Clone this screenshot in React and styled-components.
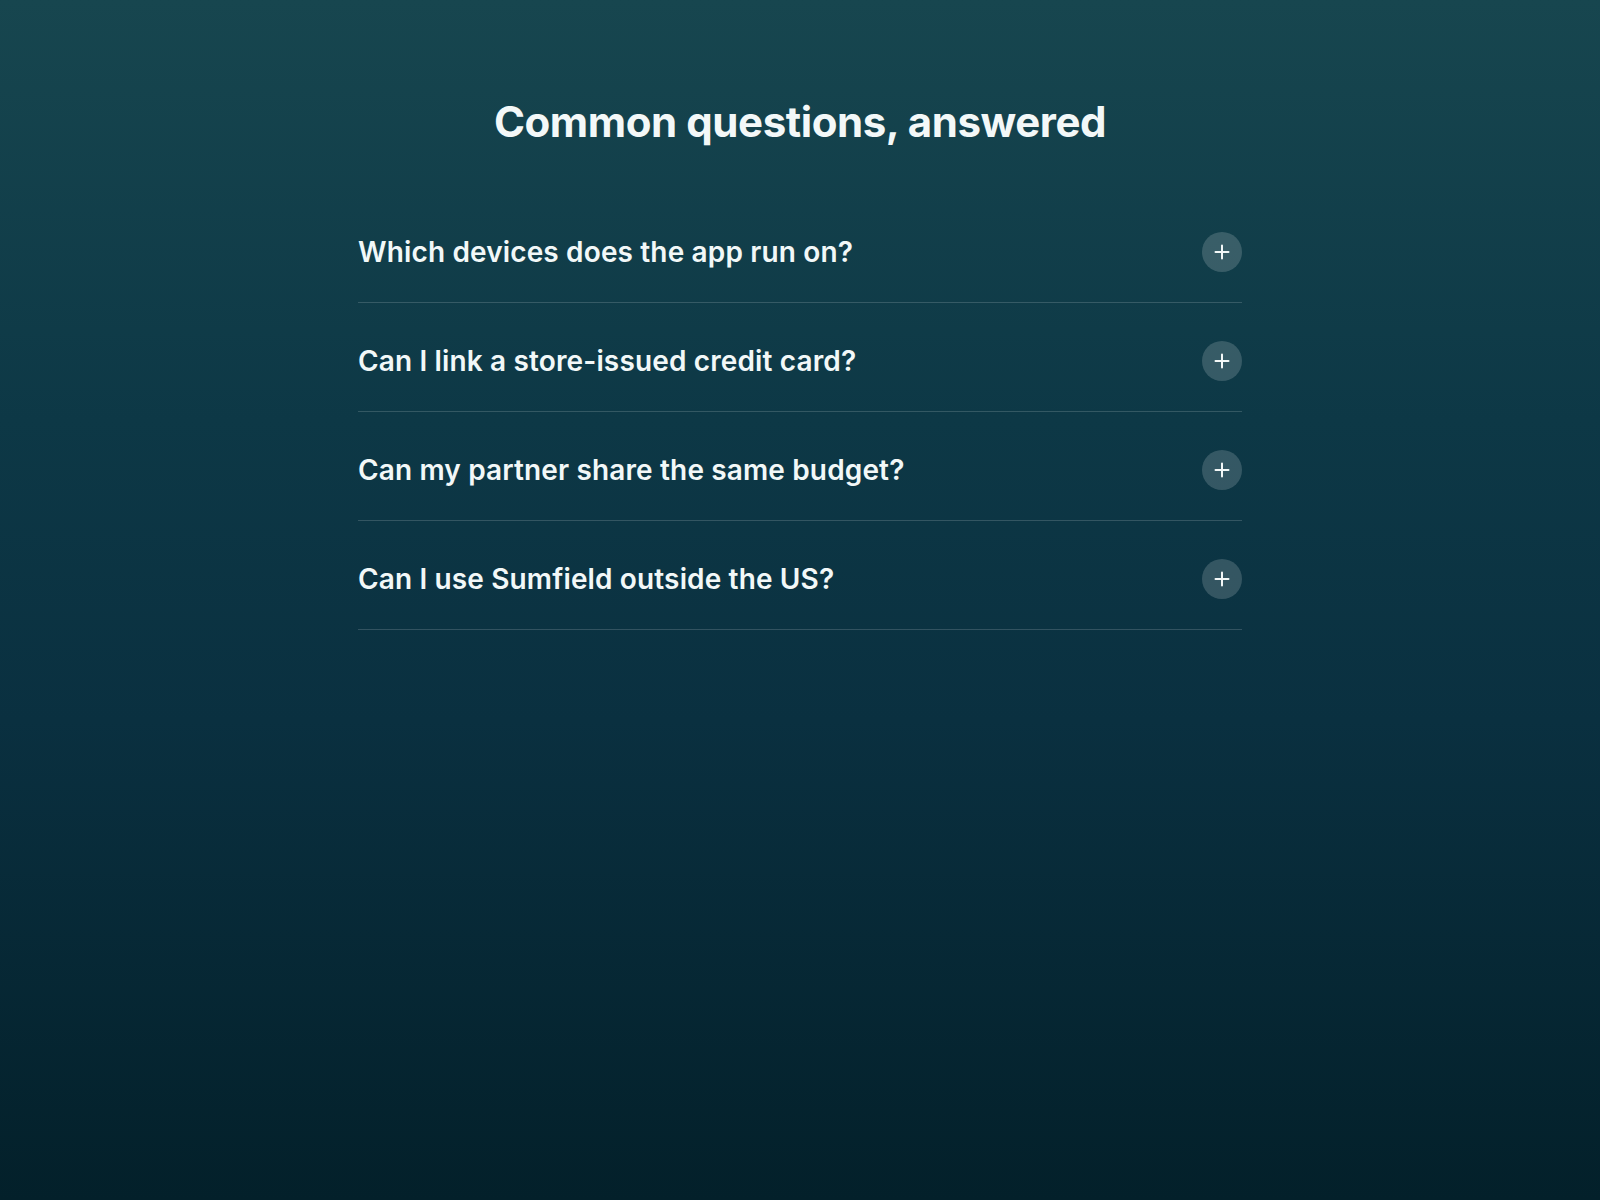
import React from "react";
import styled, { createGlobalStyle } from "styled-components";

const GlobalStyle = createGlobalStyle`
  html, body {
    margin: 0;
    padding: 0;
  }
  body {
    font-family: Inter, "Noto Sans", sans-serif;
    color: #eef6f6;
    background: #03202a;
  }
`;

const Page = styled.main`
  min-height: 1200px;
  box-sizing: border-box;
  padding-top: 98px;
  background: linear-gradient(180deg, #17464f 0%, #0d3846 35%, #0a3040 60%, #03202a 100%);
`;

const Section = styled.section`
  width: 884px;
  margin: 0 auto;
`;

const Title = styled.h2`
  margin: 0 0 48px;
  font-size: 42px;
  line-height: 48px;
  font-weight: 700;
  letter-spacing: -0.01em;
  text-align: center;
  color: #f3f8f8;
`;

const List = styled.div`
  display: flex;
  flex-direction: column;
`;

const Item = styled.div`
  border-bottom: 1px solid rgba(255, 255, 255, 0.16);
`;

const Question = styled.button`
  display: flex;
  align-items: center;
  justify-content: space-between;
  width: 100%;
  padding: 38px 0 30px;
  border: 0;
  background: none;
  cursor: pointer;
  font-family: inherit;
  text-align: left;
  color: #f2f8f8;
  font-size: 28px;
  line-height: 40px;
  font-weight: 600;
  letter-spacing: 0.005em;
`;

const Toggle = styled.span`
  display: flex;
  align-items: center;
  justify-content: center;
  width: 40px;
  height: 40px;
  flex: none;
  border-radius: 50%;
  background: rgba(255, 255, 255, 0.17);
`;

const PlusIcon = () => (
  <svg width="16" height="16" viewBox="0 0 16 16" fill="none">
    <path d="M8 1.5v13M1.5 8h13" stroke="#f3f8f8" strokeWidth="2" strokeLinecap="round" />
  </svg>
);

const questions = [
  "Which devices does the app run on?",
  "Can I link a store-issued credit card?",
  "Can my partner share the same budget?",
  "Can I use Sumfield outside the US?",
];

export default function App() {
  return (
    <>
      <GlobalStyle />
      <Page>
        <Section>
          <Title>Common questions, answered</Title>
          <List>
            {questions.map((q) => (
              <Item key={q}>
                <Question>
                  {q}
                  <Toggle>
                    <PlusIcon />
                  </Toggle>
                </Question>
              </Item>
            ))}
          </List>
        </Section>
      </Page>
    </>
  );
}
